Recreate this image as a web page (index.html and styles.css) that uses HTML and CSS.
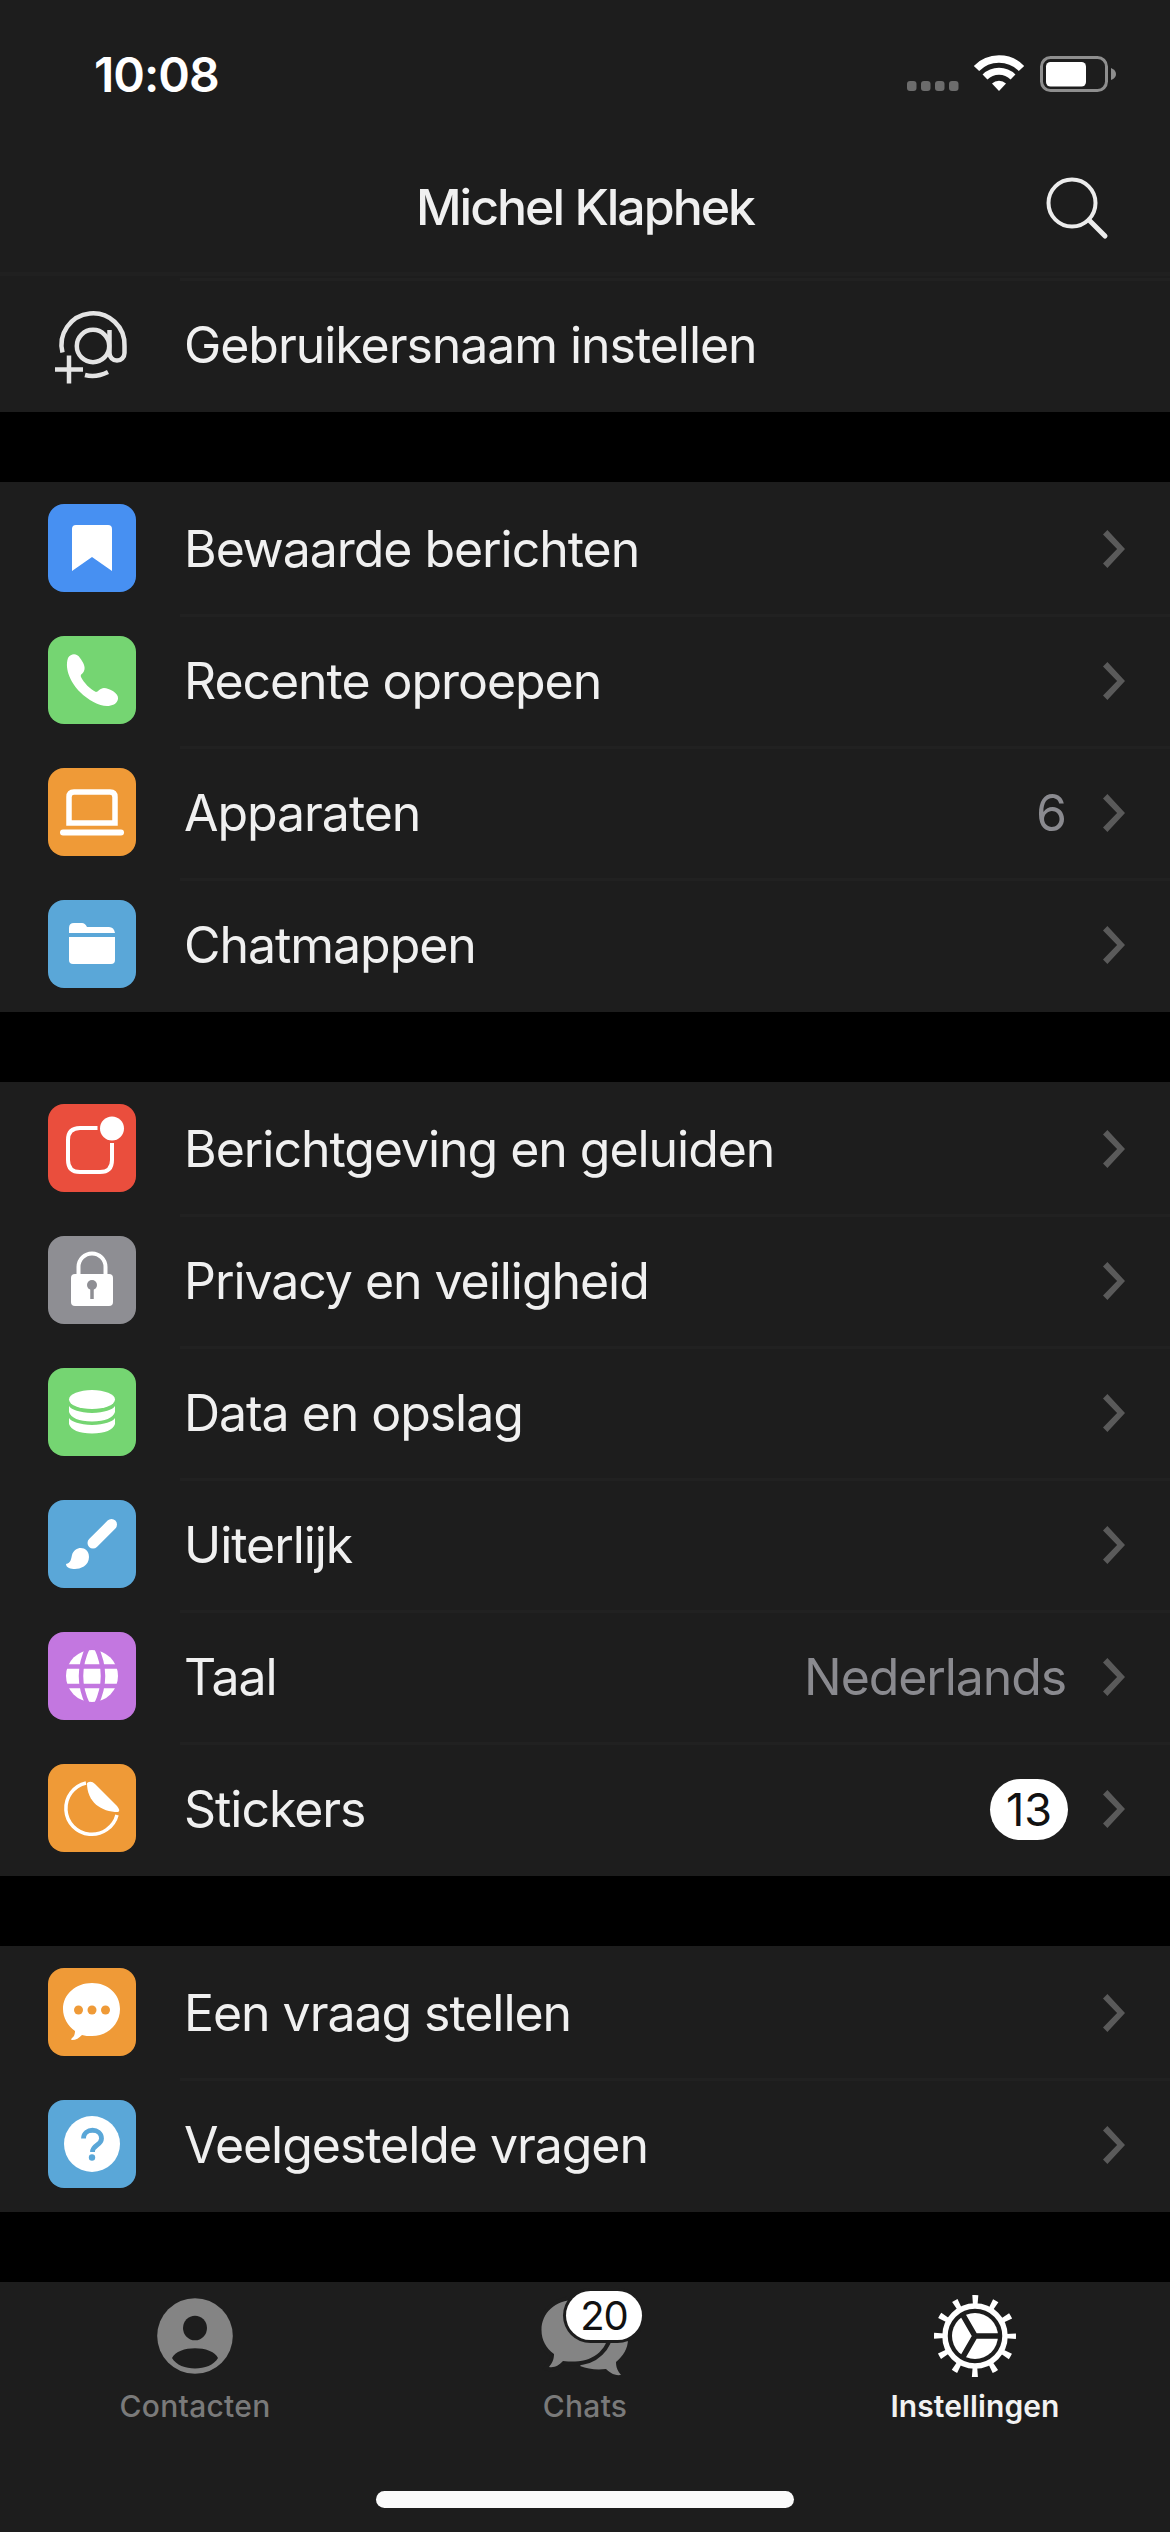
FILE: index.html
```html
<!DOCTYPE html>
<html lang="nl">
<head>
    <meta charset="UTF-8">
    <meta name="viewport" content="width=device-width, initial-scale=1.0">
    <title>Instellingen</title>
    <link rel="stylesheet" href="styles.css">
</head>
<body>
    <header class="header">
        <div class="status">
            <span class="time">10:08</span>
            <svg class="status-icons" width="210" height="38" viewBox="0 0 210 38">
                <g fill="#6c6c6c">
                    <rect x="1" y="27" width="9.5" height="10" rx="3"/>
                    <rect x="15" y="27" width="9.5" height="10" rx="3"/>
                    <rect x="29" y="27" width="9.5" height="10" rx="3"/>
                    <rect x="43" y="27" width="9.5" height="10" rx="3"/>
                </g>
                <g fill="none" stroke="#fff">
                    <path d="M70.500 14.500a31.500 31.500 0 0 1 45 0" stroke-width="7.500"/>
                    <path d="M79 23a20 20 0 0 1 28 0" stroke-width="7"/>
                </g>
                <path d="M86 29.500a10 10 0 0 1 14 0l-7 7.500z" fill="#fff"/>
                <rect x="135.500" y="3.500" width="65" height="33" rx="9" fill="none" stroke="#8e8e8e" stroke-width="3"/>
                <rect x="140" y="8" width="40" height="24.500" rx="4.500" fill="#fff"/>
                <path d="M205 14v12q5-2 5-6t-5-6z" fill="#8e8e8e"/>
            </svg>
        </div>
        <div class="nav">
            <h1 class="title">Michel Klaphek</h1>
            <svg class="search" width="64" height="64" viewBox="0 0 64 64" fill="none" stroke="#ececec">
                <circle cx="27" cy="27" r="23.500" stroke-width="4"/>
                <path d="M44 44L60 60" stroke-width="5" stroke-linecap="round"/>
            </svg>
        </div>
    </header>

    <main>
        <div class="group first">
            <a class="row">
                <svg class="icon" viewBox="0 0 88 88" fill="none" stroke="#e4e4e4" stroke-width="4.500">
                    <path d="M14.500 52.500A31.500 31.500 0 1 1 76.500 46V53A7.500 7.500 0 0 1 61.500 53V30"/>
                    <circle cx="45" cy="46" r="16.200"/>
                    <path d="M37 75Q48 78 60 72"/>
                    <path d="M21 55.500v28M7 69.500h28"/>
                </svg>
                <div class="body"><span class="label">Gebruikersnaam instellen</span></div>
            </a>
        </div>

        <div class="group">
            <a class="row">
                <svg class="icon blue" viewBox="0 0 88 88">
                    <path d="M24 67V25q0-4 4-4h32q4 0 4 4v42L44 53z"/>
                </svg>
                <div class="body"><span class="label">Bewaarde berichten</span><i class="chevron"></i></div>
            </a>
            <a class="row">
                <svg class="icon green" viewBox="0 0 88 88">
                    <path d="M20 22c3-5 9-5 12 0 3 4 6 9 4 13-1 3-4 3-3 6 3 6 9 12 15 15 2 0 4-4 8-4 5 0 15 5 14 11-1 5-6 7-11 7-8 0-19-6-27-14S16 34 20 22z"/>
                </svg>
                <div class="body"><span class="label">Recente oproepen</span><i class="chevron"></i></div>
            </a>
            <a class="row">
                <svg class="icon orange" viewBox="0 0 88 88">
                    <path d="M21 55V29q0-5 5-5h36q5 0 5 5v26z" fill="none" stroke="#fff" stroke-width="5.500"/>
                    <rect x="12" y="61.500" width="64" height="6" rx="3"/>
                </svg>
                <div class="body"><span class="label">Apparaten</span><span class="value">6</span><i class="chevron"></i></div>
            </a>
            <a class="row">
                <svg class="icon sky" viewBox="0 0 88 88">
                    <path d="M21 33v-5q0-5 5-5h8q3 0 5 4h22q5 0 6 6z"/>
                    <path d="M21 37h46v23q0 4-4 4H25q-4 0-4-4z"/>
                </svg>
                <div class="body"><span class="label">Chatmappen</span><i class="chevron"></i></div>
            </a>
        </div>

        <div class="group">
            <a class="row">
                <svg class="icon red" viewBox="0 0 88 88">
                    <path d="M49.500 24H32q-12 0-12 12v20q0 12 12 12h20q12 0 12-12V39" fill="none" stroke="#fff" stroke-width="4"/>
                    <circle cx="64" cy="24.500" r="12"/>
                </svg>
                <div class="body"><span class="label">Berichtgeving en geluiden</span><i class="chevron"></i></div>
            </a>
            <a class="row">
                <svg class="icon gray" viewBox="0 0 88 88">
                    <path d="M30.500 40V31a13.500 13.500 0 0 1 27 0v9" fill="none" stroke="#fff" stroke-width="4"/>
                    <rect x="23" y="38" width="42" height="32" rx="4"/>
                    <circle cx="44" cy="49" r="5" fill="#8e8e93"/>
                    <path d="M44 49v14" stroke="#8e8e93" stroke-width="3.500"/>
                </svg>
                <div class="body"><span class="label">Privacy en veiligheid</span><i class="chevron"></i></div>
            </a>
            <a class="row">
                <svg class="icon green" viewBox="0 0 88 88">
                    <ellipse cx="44" cy="31.500" rx="23" ry="9.500"/>
                    <path d="M21 38q4 6 23 7 19-1 23-7v6q-3 9-23 9.500-20-.5-23-9.500z"/>
                    <path d="M21 50q4 6 23 7 19-1 23-7v6q-3 9-23 9.500-20-.5-23-9.500z"/>
                </svg>
                <div class="body"><span class="label">Data en opslag</span><i class="chevron"></i></div>
            </a>
            <a class="row">
                <svg class="icon sky" viewBox="0 0 88 88">
                    <path d="M45 43L63.500 24.500" stroke="#fff" stroke-width="11" stroke-linecap="round"/>
                    <path d="M18 64c5-1 5-5 6-9 3-10 17-9 17 2 0 9-9 12-14 12-4 0-9-1-9-5z"/>
                </svg>
                <div class="body"><span class="label">Uiterlijk</span><i class="chevron"></i></div>
            </a>
            <a class="row">
                <svg class="icon purple" viewBox="0 0 88 88">
                    <circle cx="44" cy="44" r="26"/>
                    <g fill="none" stroke="#c377e0" stroke-width="4.500">
                        <path d="M16 34.500h56M16 54h56"/>
                        <path d="M40 15Q26 44 40 73M48 15Q62 44 48 73"/>
                    </g>
                </svg>
                <div class="body"><span class="label">Taal</span><span class="value">Nederlands</span><i class="chevron"></i></div>
            </a>
            <a class="row">
                <svg class="icon orange" viewBox="0 0 88 88">
                    <path d="M38 19A26 26 0 1 0 69 51" fill="none" stroke="#fff" stroke-width="3.500"/>
                    <path d="M39 19q4-3 8 1l22 22q4 5 1 6C53 48 39 38 39 19z"/>
                </svg>
                <div class="body"><span class="label">Stickers</span><span class="badge">13</span><i class="chevron"></i></div>
            </a>
        </div>

        <div class="group">
            <a class="row">
                <svg class="icon orange" viewBox="0 0 88 88">
                    <path d="M44 15c16 0 28 11 28 26S60 68 44 68c-4 0-7 0-10-1-3 3-6 5-10 5-1 0-1-1 0-2 2-1 3-4 3-7-7-5-12-13-12-22 0-15 13-26 29-26z"/>
                    <g fill="#ef9a37">
                        <circle cx="30.500" cy="42" r="4.500"/>
                        <circle cx="44" cy="42" r="4.500"/>
                        <circle cx="57.500" cy="42" r="4.500"/>
                    </g>
                </svg>
                <div class="body"><span class="label">Een vraag stellen</span><i class="chevron"></i></div>
            </a>
            <a class="row">
                <svg class="icon sky" viewBox="0 0 88 88">
                    <circle cx="44" cy="44" r="28"/>
                    <path d="M35.500 38.500c0-11 18-11 18 0 0 7-9 6-9 13.500" fill="none" stroke="#5aa7d8" stroke-width="4.800"/>
                    <circle cx="44" cy="57.500" r="3.200" fill="#5aa7d8"/>
                </svg>
                <div class="body"><span class="label">Veelgestelde vragen</span><i class="chevron"></i></div>
            </a>
        </div>
    </main>

    <footer class="tabbar">
        <div class="tabs">
            <a class="tab">
                <svg width="90" height="90" viewBox="0 0 90 90">
                    <circle cx="45" cy="45" r="37.800" fill="#848484"/>
                    <ellipse cx="45" cy="37" rx="12" ry="12.300" fill="#1d1d1d"/>
                    <path d="M22 67c6-13 40-13 46 0-8 14-38 14-46 0z" fill="#1d1d1d"/>
                </svg>
                <span>Contacten</span>
            </a>
            <a class="tab">
                <svg width="90" height="90" viewBox="0 0 90 90">
                    <path d="M88 48c0 10-5 17-12 23 0 6 2 9 5 13-7 1-12-3-15-6-10 1-18 0-26-3L70 44z" fill="#848484"/>
                    <path d="M35 9c20 0 34 13 34 30S55 70.500 35 70.500c-5 0-9 0-12-.5-4 4-8 7-14 6 3-4 5-7 5-13C6 57 1.500 49 1.500 39 1.500 22 15 9 35 9z" fill="#848484" stroke="#1d1d1d" stroke-width="8" paint-order="stroke"/>
                </svg>
                <b class="count">20</b>
                <span>Chats</span>
            </a>
            <a class="tab active">
                <svg width="90" height="90" viewBox="-45 -45 90 90">
                    <circle r="30" fill="none" stroke="#fff" stroke-width="5.500"/>
                    <!-- twelve teeth as a dashed ring -->
                    <circle r="36" fill="none" stroke="#fff" stroke-width="10" stroke-dasharray="5.400 13.450" stroke-dashoffset="2.700"/>
                    <circle r="23" fill="#fff"/>
                    <path d="M0 0H26M0 0L-13-22.500M0 0L-13 22.500" stroke="#1d1d1d" stroke-width="5.500"/>
                </svg>
                <span>Instellingen</span>
            </a>
        </div>
        <div class="home"></div>
    </footer>
</body>
</html>
```
FILE: styles.css
```css
* {
    margin: 0;
    padding: 0;
    box-sizing: border-box;
}
body {
    width: 1170px;
    height: 2532px;
    background-color: #000;
    color: #f0f0f0;
    font-family: Inter, "Liberation Sans", sans-serif;
    font-size: 50px;
    overflow: hidden;
}
.header {
    height: 278px;
    background-color: #1d1d1d;
}
.status {
    height: 138px;
    display: flex;
    align-items: flex-start;
    justify-content: space-between;
    padding: 54px 54px 0 94px;
}
.time {
    font-size: 48px;
    line-height: 42px;
    font-weight: 600;
    color: #fff;
    letter-spacing: -1px;
}
.nav {
    height: 138px;
    display: grid;
    grid-template-columns: 1fr auto 1fr;
    align-items: center;
    border-bottom: 4px solid #202020;
}
.title {
    grid-column: 2;
    font-size: 50px;
    font-weight: 500;
    padding-top: 4px;
    letter-spacing: -2px;
}
.search {
    justify-self: end;
    margin: 5px 61px 0 0;
}
.group {
    background-color: #1d1d1d;
    padding-bottom: 2px;
    margin-bottom: 70px;
}
.row {
    display: flex;
    align-items: center;
    height: 132px;
    padding-left: 48px;
}
.icon {
    width: 88px;
    height: 88px;
    margin-right: 44px;
    border-radius: 16px;
    fill: #fff;
}
.first .icon {
    fill: none;
}
.body {
    flex: 1;
    height: 132px;
    display: flex;
    align-items: center;
    padding: 2px 45px 0 4px;
}
.row + .row .body, .first .body {
    box-shadow: inset 0 3px #212121;
}
.label {
    flex: 1;
    letter-spacing: -1.05px;
}
.value {
    color: #8a8a8f;
    letter-spacing: -1.1px;
}
.badge {
    width: 78px;
    height: 61px;
    line-height: 61px;
    margin-right: -2px;
    border-radius: 31px;
    background-color: #fff;
    color: #111;
    font-size: 45px;
    text-align: center;
}
.chevron {
    width: 22px;
    height: 38px;
    margin-left: 37px;
    background-color: #5a5a5a;
    clip-path: polygon(0 12%, 20% 0, 100% 50%, 20% 100%, 0 88%, 64% 50%);
}
.blue {
    background-color: #4790f2;
}
.green {
    background-color: #75d572;
}
.orange {
    background-color: #ef9a37;
}
.sky {
    background-color: #5aa7d8;
}
.red {
    background-color: #ea4e3d;
}
.gray {
    background-color: #8e8e93;
}
.purple {
    background-color: #c377e0;
}
.tabbar {
    height: 250px;
    background-color: #1d1d1d;
}
.tabs {
    display: flex;
    height: 209px;
    padding-top: 9px;
}
.tab {
    position: relative;
    flex: 1;
    display: flex;
    flex-direction: column;
    align-items: center;
    gap: 7px;
    color: #7a7a7a;
    font-size: 30px;
    line-height: 36px;
    font-weight: 500;
    letter-spacing: 0.3px;
}
.active {
    color: #f2f2f2;
    font-weight: 600;
    letter-spacing: 0.1px;
}
/* unread counter on top of the chats icon */
.count {
    position: absolute;
    top: 0;
    left: 176px;
    width: 76px;
    height: 49px;
    line-height: 49px;
    border-radius: 25px;
    background-color: #fff;
    color: #111;
    font-size: 40px;
    font-weight: 400;
    letter-spacing: -1px;
    text-align: center;
    box-shadow: 0 0 0 3px #1d1d1d;
}
.home {
    width: 418px;
    height: 17px;
    margin: 0 auto;
    border-radius: 9px;
    background-color: #fafafa;
}
```
